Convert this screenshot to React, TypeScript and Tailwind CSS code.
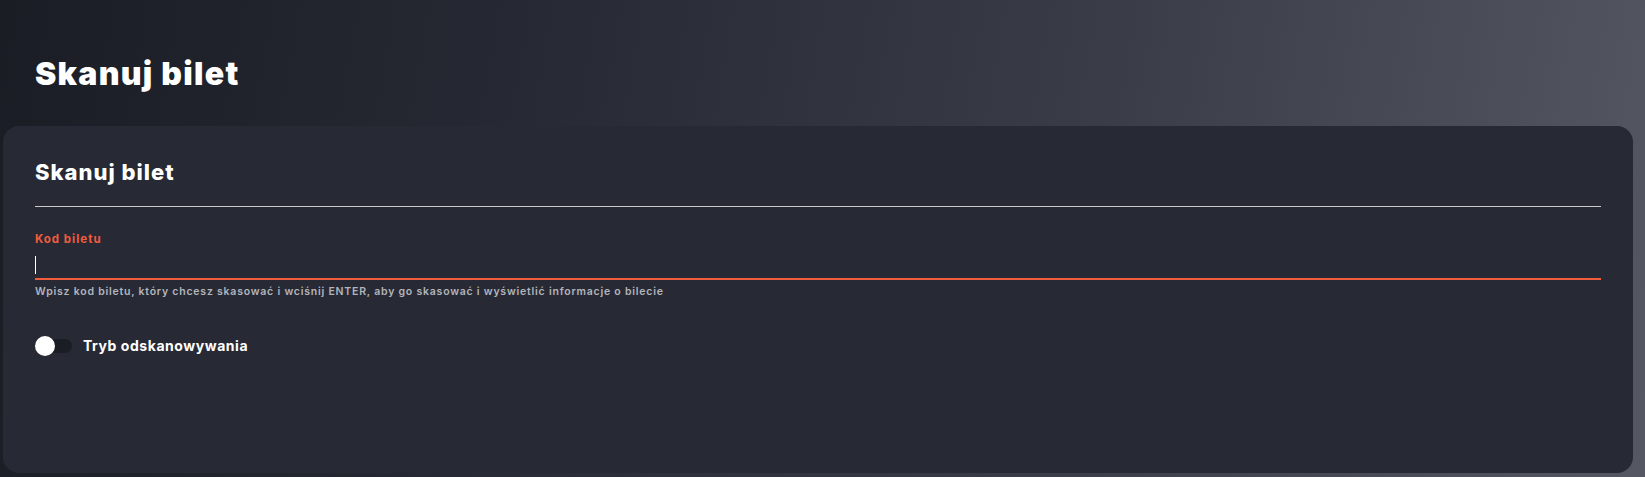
import React, { useState } from 'react';

const App: React.FC = () => {
  const [rescan, setRescan] = useState(false);

  return (
    <div className="min-h-[477px] w-full bg-[linear-gradient(100deg,#1b1d25_0%,#262933_30%,#3a3c48_65%,#555762_100%)] font-['Inter','Liberation_Sans',sans-serif] pl-[3px] pr-[12px] pb-[4px]">
      <div className="pt-[52px] pb-[30px] pl-[32px]">
        <h1 className="text-[32px] leading-[44px] font-black text-white tracking-[1.3px]">Skanuj bilet</h1>
      </div>

      <div className="bg-[#272a35] rounded-2xl px-[32px] pt-[31px] h-[347px]">
        <h2 className="text-[22px] leading-[30px] font-extrabold text-white tracking-[1px]">Skanuj bilet</h2>
        <div className="mt-[19px] h-px bg-[#c9c9cc]" />

        <div className="mt-[25px]">
          <label className="block text-[11.5px] leading-[14px] font-bold text-[#f25c3d] tracking-[1px]">Kod biletu</label>
          <div className="mt-[6px] border-b-2 border-[#f25c3d] h-[28px] flex items-center">
            <span className="block w-px h-[18px] bg-white" />
          </div>
          <p className="mt-[5px] text-[10.5px] leading-[14px] font-semibold text-[#b3b5bc] tracking-[0.78px]">
            Wpisz kod biletu, który chcesz skasować i wciśnij ENTER, aby go skasować i wyświetlić informacje o bilecie
          </p>
        </div>

        <div className="mt-[37px] flex items-center gap-[11px]">
          <button
            onClick={() => setRescan(!rescan)}
            className="relative w-[37px] h-[20px] flex items-center"
          >
            <span className="absolute left-[2px] right-0 h-[14px] rounded-full bg-[#1b1d24]" />
            <span className={`absolute top-0 w-[20px] h-[20px] rounded-full bg-white ${rescan ? 'left-[17px]' : 'left-0'}`} />
          </button>
          <span className="text-[14px] leading-[20px] font-bold text-white tracking-[0.55px]">Tryb odskanowywania</span>
        </div>
      </div>
    </div>
  );
};

export default App;
